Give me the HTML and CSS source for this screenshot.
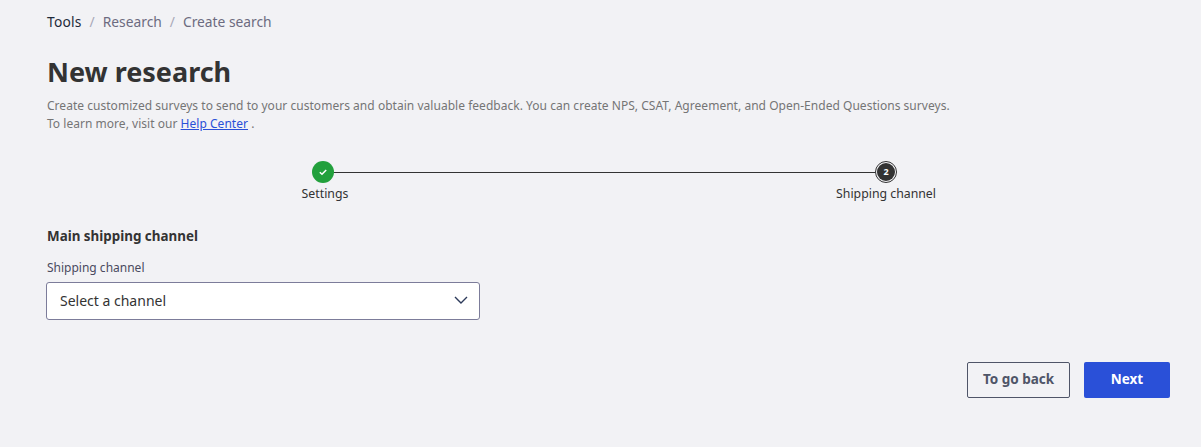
FILE: index.html
```html
<!DOCTYPE html>
<html lang="en">
<head>
<meta charset="utf-8">
<title>New research</title>
<link rel="stylesheet" href="styles.css">
</head>
<body>
<main class="page">
  <nav class="crumbs">
    <a class="crumb crumb-root">Tools</a>
    <span class="sep">/</span>
    <a class="crumb">Research</a>
    <span class="sep">/</span>
    <a class="crumb">Create search</a>
  </nav>
  <h1 class="title">New research</h1>
  <p class="intro">Create customized surveys to send to your customers and obtain valuable feedback. You can create NPS, CSAT, Agreement, and Open-Ended Questions surveys.<br>To learn more, visit our <a class="help">Help Center</a> .</p>
  <div class="stepper">
    <div class="step">
      <span class="dot dot-done">
        <svg width="10" height="10" viewBox="0 0 10 10"><path d="M1.8 5.2 4 7.3 8.2 2.9" fill="none" stroke="#fff" stroke-width="1.5"/></svg>
      </span>
      <span class="step-label step-label-first">Settings</span>
    </div>
    <div class="line"></div>
    <div class="step">
      <span class="dot dot-current"><span class="dot-inner">2</span></span>
      <span class="step-label">Shipping channel</span>
    </div>
  </div>
  <h2 class="section">Main shipping channel</h2>
  <label class="field-label">Shipping channel</label>
  <div class="select">
    <span>Select a channel</span>
    <svg width="14" height="8" viewBox="0 0 14 8"><path d="M1 1 7 7 13 1" fill="none" stroke="#2c3a5a" stroke-width="1.4"/></svg>
  </div>
  <div class="actions">
    <button class="btn btn-back">To go back</button>
    <button class="btn btn-next">Next</button>
  </div>
</main>
</body>
</html>
```
FILE: styles.css
```css
* { box-sizing: border-box; }
html, body { margin: 0; height: 100%; }
body {
  background: #f2f2f5;
  color: #333;
  font-family: "Noto Sans", "Open Sans", sans-serif;
}
.page { padding: 13px 31px 0 47px; }
.crumbs { display: flex; align-items: center; height: 18px; font-size: 13.8px; line-height: 18px; color: #6c6b80; }
.crumb-root { color: #1e2a3a; letter-spacing: .2px; }
.sep { margin: 0 8px; color: #a9a9b8; }
.title { margin: 23px 0 0; font-size: 27px; line-height: 36px; font-weight: 700; color: #333; }
.intro { margin: 7px 0 0; font-size: 12px; line-height: 18px; letter-spacing: .03px; color: #757575; }
.help { color: #2a50d8; text-decoration: underline; }
.stepper { display: flex; align-items: flex-start; margin: 28px 0 0 276px; width: 563px; }
.step { z-index: 1; width: 0; display: flex; flex-direction: column; align-items: center; white-space: nowrap; }
.dot { flex: none; width: 22px; height: 22px; border-radius: 50%; display: flex; align-items: center; justify-content: center; }
.dot-done { background: #22a03c; }
.dot-current { border: 1px solid #333; background: #f2f2f5; }
.dot-inner { width: 18px; height: 18px; border-radius: 50%; background: #333; color: #fff; font-size: 9px; font-weight: 700; text-align: center; line-height: 18px; }
.step-label { margin-top: 2px; font-size: 12.3px; line-height: 18px; color: #333; }
.step-label-first { margin-left: 4px; }
.line { flex: 1; height: 1px; background: #333; margin-top: 11px; }
.section { margin: 23px 0 0; font-size: 13.4px; line-height: 20px; font-weight: 700; color: #333; }
.field-label { display: block; margin: 14px 0 0; font-size: 12px; line-height: 16px; color: #4a4a60; }
.select { display: flex; align-items: center; justify-content: space-between; width: 434px; height: 38px; margin: 6px 0 0 -1px; padding: 0 11px 2px 13px; background: #fff; border: 1px solid #7c7c9a; border-radius: 3px; font-size: 14px; color: #333; }
.actions { display: flex; justify-content: flex-end; gap: 14px; margin-top: 42px; }
.btn { height: 36px; padding: 0 0 2px; border-radius: 2px; font-family: inherit; font-size: 13.5px; font-weight: 700; }
.btn-back { width: 103px; background: transparent; border: 1px solid #4f5568; color: #4f5568; }
.btn-next { width: 86px; background: #2a50d8; border: 0; color: #fff; }
```
